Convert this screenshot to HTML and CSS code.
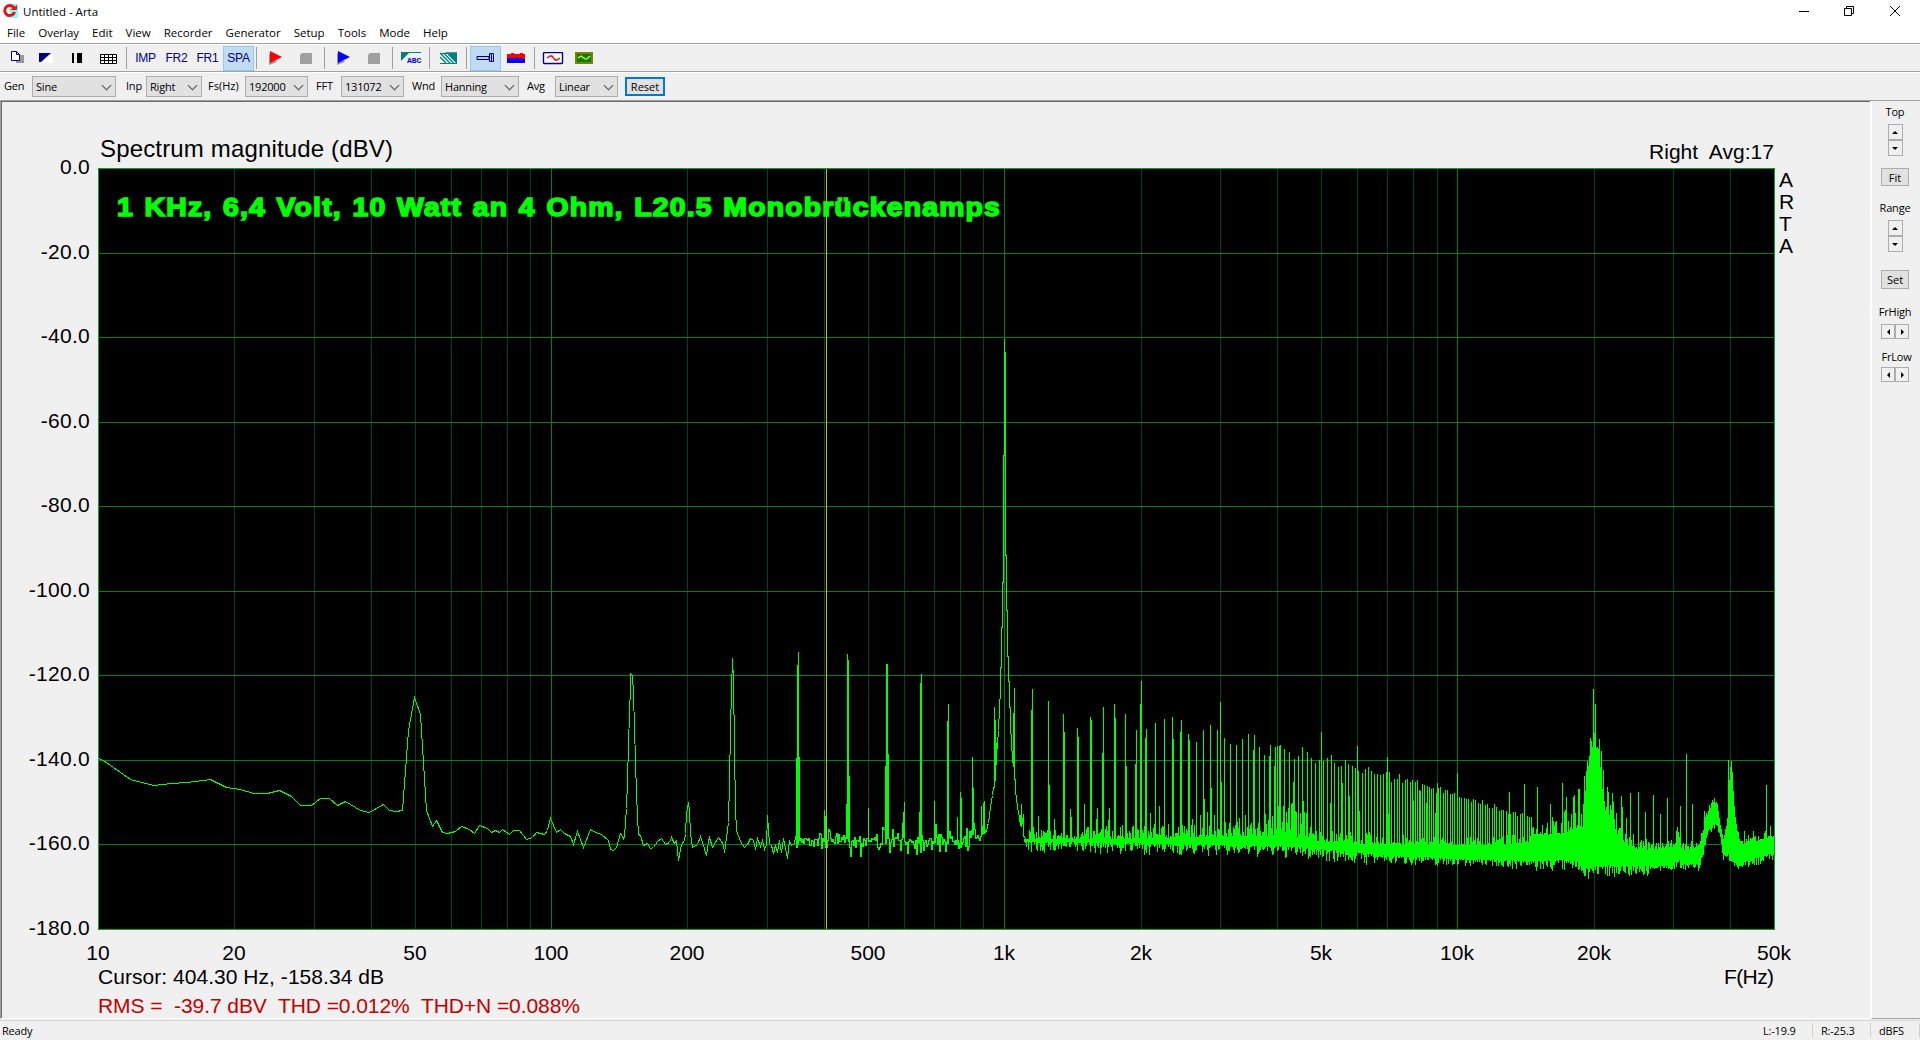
FILE: index.html
```html
<!DOCTYPE html>
<html lang="en">
<head>
    <meta charset="UTF-8">
    <title>Untitled - Arta</title>
    <link rel="stylesheet" href="styles.css">
</head>
<body>
    <header class="titlebar">
        <svg class="app-icon" width="16" height="16" viewBox="0 0 16 16"><path d="M7 1h9v14H8z" fill="#8ff"/><path d="M12 5A5 5 0 1 0 12.500 9" fill="none" stroke="#f01010" stroke-width="3"/><path d="M8 7h7V2z" fill="#f01010"/></svg>
        <span class="title">Untitled - Arta</span>
        <div class="window-buttons">
            <svg width="46" height="20"><path d="M18 10.500h10" stroke="#000"/></svg>
            <svg width="46" height="20"><path d="M17.500 7.500h7v7h-7zM19.500 7.500v-2h7v7h-2" fill="none" stroke="#000"/></svg>
            <svg width="46" height="20"><path d="M17 5l10 10M27 5L17 15" stroke="#000"/></svg>
        </div>
    </header>
    <nav class="menu">
        <a>File</a><a>Overlay</a><a>Edit</a><a>View</a><a>Recorder</a><a>Generator</a><a>Setup</a><a>Tools</a><a>Mode</a><a>Help</a>
    </nav>
    <div class="toolbar">
        <button class="new"><svg width="14" height="13"><path d="M5 4h8v8H5z" fill="#999"/><path d="M.5.500h5l3 3v6h-8zM5.500.500v3h3" fill="#fff" stroke="#000080"/></svg></button>
        <button><svg width="14" height="10"><path d="M14 0v10H2z" fill="#fff"/><path d="M0 0h12L2 9H0z" fill="#000080"/></svg></button>
        <button><svg width="12" height="10"><path d="M1 0h2v10H1zM6 0h5v10H6z"/></svg></button>
        <button class="table"><svg width="17" height="10"><path d="M.5.500h16v9H.5zM.5 3.500h16M.5 6.500h16M4.500 0v10M8.500 0v10M12.500 0v10" fill="#fff" stroke="#000"/></svg></button>
        <i class="sep"></i>
        <button class="text">IMP</button>
        <button class="text">FR2</button>
        <button class="text">FR1</button>
        <button class="text active">SPA</button>
        <i class="sep"></i>
        <button class="play"><svg width="15" height="14"><path d="M1 2v12l8-3z" fill="#999"/><path d="M2 0v12l12-6z" fill="#f00"/></svg></button>
        <button><svg width="14" height="12"><path d="M3 1h10v11H1V3z" fill="#a0a0a0"/></svg></button>
        <i class="sep"></i>
        <button class="play"><svg width="15" height="14"><path d="M1 2v12l8-3z" fill="#999"/><path d="M2 0v12l12-6z" fill="#00f"/></svg></button>
        <button><svg width="14" height="12"><path d="M3 1h10v11H1V3z" fill="#a0a0a0"/></svg></button>
        <i class="sep"></i>
        <button class="play"><svg width="21" height="12"><path d="M0 0h20v1H8L0 9z" fill="#008080"/><text x="6" y="11" class="abc">ABC</text></svg></button>
        <i class="sep"></i>
        <button class="play"><svg width="17" height="12" viewBox="0 0 17 12"><rect y="1" width="17" height="10" fill="#fff"/><path d="M7 1h10v8zM0 1l10 10M3.500 1l10 10M0 5l6 6M8 2l9 9" fill="#008080" stroke="#008080" stroke-width="1.400"/><path d="M0 11.500h17M0 1.500h17" stroke="#008080"/></svg></button>
        <i class="sep"></i>
        <button class="active"><svg width="19" height="10"><path d="M1 3.500h12v3H1zM13.500.500h4v8h-4zM15.500 0v9" fill="#b8c8e0" stroke="#000080"/><path d="M1 6.500h12" stroke="#000"/></svg></button>
        <button><svg width="18" height="10"><path d="M0 1h4V0h3v1h6V0h3v1h2v8H0z" fill="#f00"/><path d="M0 5h2V4l2 2 2-2 2 2 2-2 2 2 2-2 1 2h3v4H0z" fill="#00f"/></svg></button>
        <i class="sep"></i>
        <button><svg width="22" height="13"><rect x="1.500" y=".5" width="19" height="11" rx="1" fill="#fff" stroke="#000080" stroke-width="1.400"/><path d="M5 6l3-2h2l3 4h2l3-2" fill="none" stroke="#f00" stroke-width="1.300"/></svg></button>
        <button><svg width="19" height="13"><path d="M1 2h2v10H1z" fill="#999"/><rect x="2" y="1" width="16" height="10" fill="#008000" stroke="#808000" stroke-width="2"/><path d="M4 6l3-2 4 3h2l3-3" fill="none" stroke="#ff0" stroke-width="1.200"/></svg></button>
    </div>
    <div class="options">
        <label class="first">Gen</label><div class="select">Sine</div>
        <label class="inp">Inp</label><div class="select">Right</div>
        <label class="fs">Fs(Hz)</label><div class="select">192000</div>
        <label>FFT</label><div class="select">131072</div>
        <label>Wnd</label><div class="select">Hanning</div>
        <label>Avg</label><div class="select">Linear</div>
        <button class="reset">Reset</button>
    </div>
    <main>
        <section class="view">
            <svg id="chart" width="1868" height="916" viewBox="2 102 1868 916">
                <rect x="98" y="168" width="1677" height="762" fill="#000"/>
                <g id="grid"></g>
                <g id="labels">
                    <text x="100" y="157" class="heading" textLength="293">Spectrum magnitude (dBV)</text>
                    <text x="1649" y="159" textLength="125" xml:space="preserve">Right  Avg:17</text>
                    <text x="1779" y="187">A</text>
                    <text x="1779" y="209">R</text>
                    <text x="1779" y="231">T</text>
                    <text x="1779" y="253">A</text>
                    <text x="98" y="984" textLength="286">Cursor: 404.30 Hz, -158.34 dB</text>
                    <text x="1774" y="984" textLength="50" text-anchor="end">F(Hz)</text>
                    <text x="98" y="1013" class="result" textLength="482" xml:space="preserve">RMS =  -39.7 dBV  THD =0.012%  THD+N =0.088%</text>
                </g>
                <path id="trace"/>
                <path class="cursor" d="M826.500 169V929"/>
                <text x="117" y="216" class="caption" textLength="884" lengthAdjust="spacingAndGlyphs">1 KHz, 6,4 Volt, 10 Watt an 4 Ohm, L20.5 Monobrückenamps</text>
            </svg>
        </section>
        <aside class="panel">
            <span>Top</span>
            <div class="spin"><b class="up"></b><b class="down"></b></div>
            <button class="fit">Fit</button>
            <span>Range</span>
            <div class="spin"><b class="up"></b><b class="down"></b></div>
            <button class="set">Set</button>
            <span>FrHigh</span>
            <div class="spin horizontal"><b class="left"></b><b class="right"></b></div>
            <span class="low">FrLow</span>
            <div class="spin horizontal"><b class="left"></b><b class="right"></b></div>
        </aside>
    </main>
    <footer class="status">
        <span class="ready">Ready</span>
        <span class="level">L:-19.9</span>
        <span class="level">R:-25.3</span>
        <span class="unit">dBFS</span>
    </footer>
    <script src="chart.js"></script>
</body>
</html>
```
FILE: styles.css
```css
* {
    box-sizing: border-box;
}

body {
    margin: 0;
    height: 1040px;
    display: flex;
    flex-direction: column;
    overflow: hidden;
    background: #f0f0f0;
    color: #000;
    font-family: "Open Sans", "Noto Sans", sans-serif;
    font-size: 11px;
}

button {
    margin: 0;
    padding: 0;
    font: inherit;
    color: inherit;
}

.titlebar {
    height: 22px;
    display: flex;
    align-items: center;
    background: #fff;
    font-size: 11.500px;
}

.app-icon {
    margin: 0 5px 0 2px;
}

.window-buttons {
    display: flex;
    margin-left: auto;
    margin-right: 1px;
}

.menu {
    height: 21px;
    display: flex;
    align-items: center;
    padding: 0 0 1px 7px;
    gap: 13px;
    background: #fff;
    font-size: 11.500px;
}

.toolbar {
    height: 28px;
    display: flex;
    align-items: center;
    border-top: 1px solid #a0a0a0;
    box-shadow: inset 0 1px #fff;
    padding-top: 1px;
}

.toolbar button {
    width: 31px;
    height: 25px;
    display: flex;
    align-items: center;
    justify-content: center;
    padding-right: 2px;
    border: 1px solid transparent;
    background: none;
}

.toolbar .new {
    padding: 0 0 1px 4px;
}

.toolbar .table {
    padding: 1px 0 0;
}

.toolbar .play {
    padding-right: 0;
}

.toolbar .text {
    padding-right: 0;
    font: 12px "Liberation Sans", sans-serif;
    color: #000080;
    letter-spacing: -0.2px;
}

.toolbar .active {
    padding-right: 0;
    background: #c0dcf3;
    border-color: #90c8f6;
}

.toolbar .abc {
    font: bold 8px "Liberation Mono", monospace;
    fill: #0000e0;
}

.sep {
    width: 6px;
    height: 22px;
    background: linear-gradient(#a0a0a0, #a0a0a0) 2px 0 / 1px 100% no-repeat;
}

.options {
    height: 29px;
    display: grid;
    grid-template-columns: 32px 84px 30px 56px 43px 63px 33px 63px 37px 78px 36px 63px 7px 40px;
    align-items: center;
    border-top: 1px solid #a0a0a0;
    box-shadow: inset 0 1px #fff;
    padding-top: 1px;
}

.options label {
    padding: 0 0 2px 8px;
    letter-spacing: -0.2px;
}

.options .first {
    padding-left: 4px;
}

.options .inp {
    padding-left: 10px;
}

.options .fs {
    padding-left: 6px;
    letter-spacing: 0;
}

.select {
    height: 21px;
    display: flex;
    align-items: center;
    justify-content: space-between;
    padding: 0 5px 0 3px;
    border: 1px solid #adadad;
    background: #e1e1e1;
    letter-spacing: -0.2px;
}

.select::after {
    content: "";
    width: 6px;
    height: 6px;
    margin-bottom: 3px;
    border: solid #555;
    border-width: 0 1px 1px 0;
    transform: rotate(45deg);
}

.reset {
    grid-column: 14;
    height: 19px;
    border: 2px solid #0078d7;
    background: #e1e1e1;
    line-height: 15px;
}

main {
    height: 919px;
    display: flex;
    border-top: 1px solid #a0a0a0;
}

.view {
    width: 1871px;
    height: 918px;
    padding: 1px 0 0 1px;
    background: #f0f0f0;
    border-left: 1px solid #a0a0a0;
    border-right: 1px solid #fff;
    border-bottom: 1px solid #fff;
    box-shadow: inset 1px 1px #696969;
}

#chart {
    display: block;
}

#chart text {
    font-family: "Liberation Sans", Arial, sans-serif;
    font-size: 21px;
}

#chart .axis {
    letter-spacing: 0.3px;
}

#chart .heading {
    font-size: 24px;
}

#chart .result {
    fill: #c00000;
}

#chart .caption {
    font-weight: bold;
    font-size: 26.500px;
    letter-spacing: 1.100px;
    word-spacing: 1.500px;
    fill: #0f0;
    stroke: #0f0;
    stroke-width: 1.600px;
}

#chart path {
    fill: none;
    shape-rendering: crispEdges;
}

.minor {
    stroke: #004614;
}

.major {
    stroke: #007d23;
}

.frame {
    stroke: #00a033;
}

.cursor {
    stroke: #c8be00;
}

#trace {
    stroke: #0f0;
}

.panel {
    width: 49px;
    display: flex;
    flex-direction: column;
    align-items: center;
    padding: 3px 2px 0 0;
    border-left: 1px solid #fff;
    border-bottom: 1px solid #a0a0a0;
}

.panel span {
    line-height: 15px;
    letter-spacing: -0.2px;
}

.panel button {
    width: 28px;
    border: 1px solid #adadad;
    background: #e1e1e1;
    line-height: 15px;
}

.fit {
    height: 18px;
    margin: 12px 0 14px;
}

.set {
    height: 19px;
    margin: 18px 0 15px;
}

.panel .low {
    margin: 10px -3px 3px 0;
}

.spin {
    width: 15px;
    margin-top: 5px;
}

.spin b {
    height: 16px;
    display: flex;
    align-items: center;
    justify-content: center;
    border: 1px solid #adadad;
}

.spin b::after {
    content: "";
    border: 3px solid transparent;
}

.spin .up::after {
    border-top: 0;
    border-bottom-color: #000;
}

.spin .down::after {
    border-bottom: 0;
    border-top-color: #000;
}

.spin .left::after {
    border-left: 0;
    border-right-color: #000;
}

.spin .right::after {
    border-right: 0;
    border-left-color: #000;
}

.horizontal {
    display: flex;
    width: 28px;
}

.panel .low + .spin {
    margin-top: 0;
}

.horizontal b {
    width: 14px;
    height: 15px;
}

.status {
    height: 20px;
    margin-top: 1px;
    display: flex;
    align-items: center;
    border-top: 1px solid #d7d7d7;
    letter-spacing: -0.2px;
}

.ready {
    width: 1755px;
    padding-left: 2px;
}

.level,
.unit {
    width: 58px;
    padding-left: 8px;
    border-right: 1px solid #d0d0d0;
}

.unit {
    width: 49px;
}
```
FILE: chart.js
```js
const NS = 'http://www.w3.org/2000/svg';
const LEFT = 98, RIGHT = 1774, TOP = 168, BOTTOM = 929;
const DECADE = (RIGHT - LEFT) / Math.log10(5000);

const grid = document.getElementById('grid');
const labels = document.getElementById('labels');

const freqX = f => Math.round(LEFT + DECADE * Math.log10(f / 10));
const levelY = db => Math.round(TOP - db / 180 * (BOTTOM - TOP));

function line(d, cls) {
    const path = document.createElementNS(NS, 'path');
    path.setAttribute('d', d);
    path.setAttribute('class', cls);
    grid.appendChild(path);
}

function label(x, y, anchor, value) {
    const text = document.createElementNS(NS, 'text');
    text.setAttribute('x', x);
    text.setAttribute('y', y);
    text.setAttribute('text-anchor', anchor);
    if (anchor === 'end') {
        text.setAttribute('class', 'axis');
    }
    text.textContent = value;
    labels.appendChild(text);
}

// grid
for (let dec = 10; dec <= 10000; dec *= 10) {
    for (let n = 1; n < 10; n++) {
        const f = dec * n;
        if (f > 10 && f < 50000) {
            line(`M${freqX(f) + 0.5} ${TOP}V${BOTTOM}`, n === 1 ? 'major' : 'minor');
        }
    }
}
for (let db = 0; db >= -180; db -= 20) {
    line(`M${LEFT} ${levelY(db) + 0.5}H${RIGHT}`, 'major');
    label(90, levelY(db) + 6, 'end', db.toFixed(1));
}
line(`M${LEFT + 0.5} ${TOP + 0.5}H${RIGHT + 0.5}V${BOTTOM + 0.5}H${LEFT + 0.5}Z`, 'frame');
for (const f of [10, 20, 50, 100, 200, 500, 1000, 2000, 5000, 10000, 20000, 50000]) {
    label(freqX(f), 960, 'middle', f < 1000 ? f : f / 1000 + 'k');
}

// low frequencies, one point per bin
const low = `98,758 103,760 130,779 153,785 171,783 187,782 210,779 226,787 240,789 253,793 267,793 279,790
291,796 300,805 311,805 320,798 329,798 337,805 345,801 360,810 369,812 376,808 383,804 389,810 396,811 402,810
408,730 414,697 420,714 426,810 432,826 436,820 442,832 447,833 455,831 461,826 469,829 474,833 479,825 487,828
491,832 495,830 499,832 502,829 509,834 513,830 519,830 526,839 532,837 536,832 544,834 547,830 550,818 556,832
560,829 564,833 570,836 573,844 577,831 583,847 590,829 595,832 601,834 608,840 610,849 613,850 616,847 620,833
623,838 624,836 626,808 627,780 628,744 629,713 630,687 630,673 632,675 633,694 634,727 635,760 636,793 637,816
638,834 640,835 643,845 647,843 650,848 653,847 657,841 661,838 665,844 669,842 671,837 674,843 676,840 678,860
681,844 684,840 685,833 686,813 688,802 689,811 690,833 692,847 697,844 700,836 703,845 706,855 708,841 709,837
712,847 718,837 723,844 724,852 726,837 728,822 729,781 730,730 731,689 732,658 733,680 734,747 735,809 736,830
740,841 744,847 747,844 750,838 753,840 755,849 757,838 760,846 762,840 764,849 766,844 767,815 769,843 771,845
773,853 775,845 777,852 779,840 781,852 783,838 787,858 789,840 791,845 794,843 795,836`;

// the 1 kHz tone
const tone = `986,832 987,825 988,823 990,807 992,795 993,787 994,787 994,707 995,780 995,720 996,764 996,755 997,743 998,730
999,708 1000,690 1000,667 1001,667 1001,627 1002,627 1002,582 1003,582 1003,455 1004,455 1004,339 1005,363 1005,555
1006,555 1006,610 1007,610 1007,656 1008,656 1008,681 1009,681 1009,707 1010,707 1010,724 1011,742 1012,758 1013,766
1013,739 1014,688 1014,779 1015,779 1015,791 1016,798 1017,807 1018,811 1019,817 1020,825 1021,804 1021,826 1022,821
1023,814 1023,834 1024,838`;

// x and top of each harmonic line
const spikes = `796,758 797,665 798,652 799,757 824,810 825,816 846,804 847,654 848,660 849,776 868,808 885,766 886,664
887,664 888,754 903,812 904,802 919,812 920,683 921,674 934,801 947,721 948,704 957,817 960,792 961,798 972,757
973,788 981,806 983,803 984,801 1031,710 1032,689 1038,816 1048,701 1049,785 1054,819 1063,714 1064,732 1070,809
1071,817 1077,728 1078,737 1084,804 1090,717 1091,720 1096,819 1097,808 1102,753 1103,707 1108,820 1109,808 1114,704
1115,718 1125,714 1126,766 1135,764 1136,730 1140,704 1141,681 1145,738 1146,729 1150,813 1155,723 1159,806 1164,719
1168,824 1172,717 1173,739 1180,732 1181,720 1188,734 1189,740 1192,819 1196,742 1200,815 1203,730 1204,799 1207,812
1210,725 1211,788 1214,815 1217,730 1220,702 1221,782 1224,738 1230,744 1236,745 1239,818 1242,739 1245,815 1248,734
1253,750 1254,735 1259,747 1264,755 1265,814 1269,756 1270,745 1272,816 1274,766 1275,747 1277,746 1278,806 1279,746
1280,745 1283,806 1284,749 1286,812 1288,808 1289,752 1291,804 1292,803 1293,782 1294,759 1295,811 1296,812 1298,756
1300,813 1302,747 1303,801 1304,812 1306,813 1307,752 1311,758 1315,763 1319,760 1321,732 1323,761 1327,758 1330,803
1331,755 1334,763 1338,767 1341,766 1342,783 1345,760 1348,764 1349,796 1352,766 1355,768 1357,746 1358,771 1359,811
1362,773 1365,769 1368,767 1371,771 1374,774 1377,774 1380,775 1383,774 1386,772 1387,757 1388,814 1389,772 1391,782
1394,779 1397,779 1399,774 1402,783 1405,780 1407,779 1410,782 1412,780 1413,801 1415,782 1417,780 1419,790 1420,791
1422,784 1424,785 1426,803 1427,786 1429,787 1431,789 1433,788 1435,813 1436,793 1437,783 1438,788 1457,773 1509,792
1524,784 1537,787 1550,804 1562,783 1566,797 1573,797 1574,795 1578,789 1579,789 1584,776 1586,771 1587,761 1590,738
1593,689 1594,733 1595,704 1599,739 1601,751 1603,770 1607,787 1608,792 1612,793 1613,802 1621,796 1622,807 1626,818
1630,793 1633,834 1638,792 1645,812 1653,795 1660,814 1667,798 1676,831 1677,827 1678,832 1680,806 1686,754 1692,804
1704,811 1728,760 1731,761 1744,831 1753,831 1766,785 1770,826`;

// noise floor: x, top, bottom, jitter
const floor = [
    [1024, 836, 844, 8], [1100, 836, 845, 9], [1220, 833, 847, 10], [1290, 831, 849, 10],
    [1315, 838, 851, 8], [1380, 842, 857, 6], [1450, 843, 860, 5], [1500, 843, 861, 6],
    [1528, 840, 863, 7], [1531, 830, 863, 12], [1560, 830, 862, 15], [1574, 822, 863, 15],
    [1580, 826, 865, 20], [1583, 815, 867, 10], [1587, 774, 870, 9], [1592, 744, 870, 8],
    [1597, 746, 868, 8], [1600, 770, 868, 5], [1603, 800, 868, 14], [1607, 812, 867, 14],
    [1615, 826, 868, 15], [1625, 838, 868, 14], [1631, 845, 868, 7], [1650, 848, 868, 4],
    [1672, 845, 867, 6], [1677, 838, 859, 6], [1682, 848, 865, 5], [1699, 845, 866, 4],
    [1704, 824, 847, 5], [1708, 810, 832, 5], [1713, 801, 824, 4], [1717, 804, 826, 4],
    [1720, 823, 838, 4], [1723, 838, 857, 4], [1727, 820, 853, 5], [1729, 784, 858, 5],
    [1730, 767, 861, 2], [1732, 774, 862, 2], [1734, 808, 863, 3], [1737, 835, 866, 4],
    [1742, 843, 864, 5], [1755, 839, 860, 6], [1775, 834, 854, 6]
];

let seed = 7;
function rnd() {
    seed = (seed * 16807) % 2147483647;
    return seed / 2147483647;
}

const tops = new Map(spikes.split(/\s+/).map(p => p.split(',').map(Number)));
for (let x = 1440, i = 0; x < 1532; x += i++ % 3 ? 2 : 3) {
    if (!tops.has(x)) {
        tops.set(x, Math.round(787 + (x - 1440) * 0.310 + rnd() * 6));
    }
}

function column(x, top, bottom) {
    return `M${x + 0.5} ${Math.round(top)}V${Math.round(bottom)}`;
}

function points(list) {
    return 'M' + list.split(/\s+/).map(p => {
        const [x, y] = p.split(',').map(Number);
        return `${x + 0.5} ${y + 0.5}`;
    }).join('L');
}

let d = points(low) + points(tone);

let last = 842;
for (let x = 796; x < 986; x++) {
    const spread = x < 850 ? 26 : 36;
    const lift = x > 960 ? (x - 960) * 0.3 : 0;
    const y = 840 - lift + Math.pow(rnd() - 0.5, 3) * spread * 3 + (rnd() - 0.5) * 7;
    d += column(x, Math.min(last, y, tops.get(x) || 999), Math.max(last, y) + 1);
    last = y;
}

let row = 0;
for (let x = 1024; x < RIGHT; x++) {
    while (floor[row + 1][0] <= x) {
        row++;
    }
    const [x0, t0, b0, j0] = floor[row];
    const [x1, t1, b1] = floor[row + 1];
    const k = (x - x0) / (x1 - x0);
    const top = t0 + (t1 - t0) * k - (Math.pow(rnd(), 2) * 1.6 - 0.4) * j0;
    const bottom = b0 + (b1 - b0) * k + (Math.pow(rnd(), 2) * 1.5 - 0.3) * Math.min(j0, 8);
    d += column(x, Math.min(top, tops.get(x) || 999), bottom);
}
document.getElementById('trace').setAttribute('d', d);
```
